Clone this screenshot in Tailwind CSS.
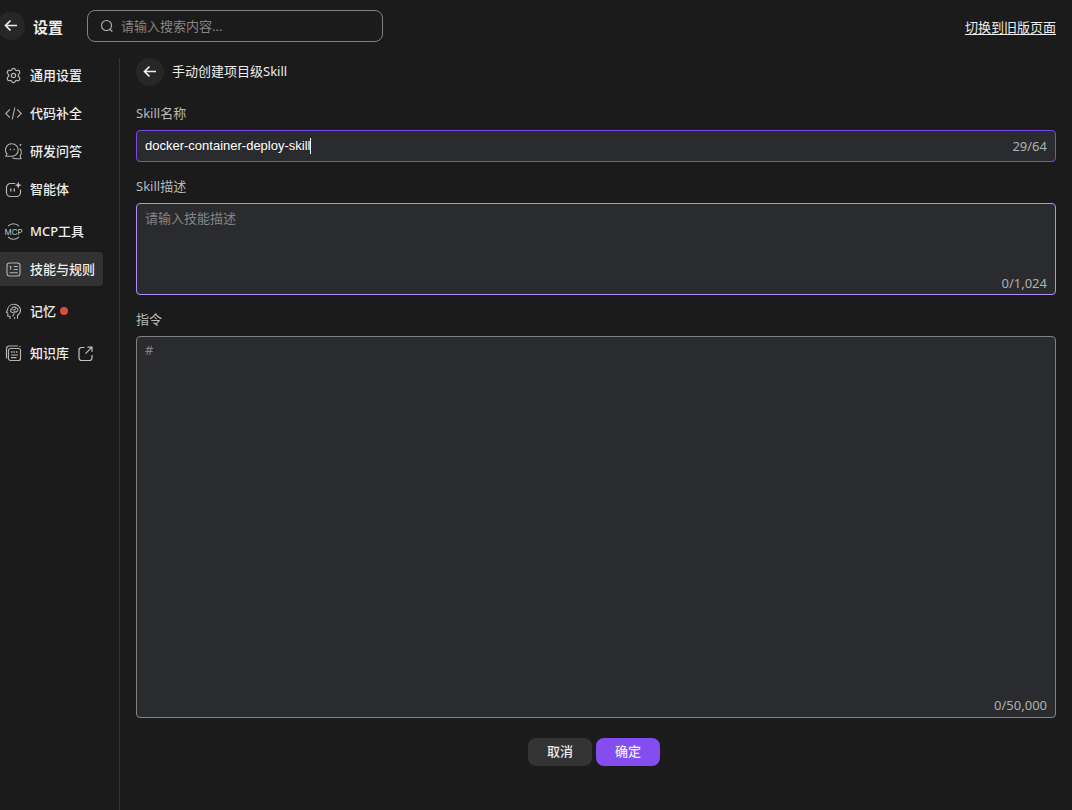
<!DOCTYPE html>
<html lang="zh-CN">
<head>
<meta charset="utf-8">
<meta name="viewport" content="width=device-width, initial-scale=1">
<title>设置</title>
<script src="https://cdn.jsdelivr.net/npm/@tailwindcss/browser@4"></script>
</head>
<body class="flex min-h-screen flex-col overflow-x-hidden bg-[#1b1b1b] font-['Noto_Sans','Noto_Sans_CJK_SC',sans-serif] text-[13px] leading-5 text-[#ededed]">
<header class="flex h-[58px] shrink-0 items-start pt-2.5 pr-4">
  <div class="flex h-8 items-center">
    <button type="button" aria-label="返回" class="-ml-[3px] flex size-7 items-center justify-center rounded-full bg-[#272727]">
      <svg class="size-4" viewBox="0 0 16 16" fill="none" stroke="#eee" stroke-width="1.700"><path d="M14 7.500H2.700M7.500 2.500 2.500 7.500 7.500 12.500"/></svg>
    </button>
    <h1 class="ml-2 pt-0.5 text-[15px] font-bold">设置</h1>
  </div>
  <label class="ml-6 flex h-8 w-[296px] items-center gap-[7px] rounded-lg border border-[#828282] px-3">
    <svg class="size-3.5 shrink-0" viewBox="0 0 14 14" fill="none" stroke="#b5b5b5" stroke-width="1.1"><circle cx="6.500" cy="6.500" r="5"/><path d="m10 10.500 2.300 2"/></svg>
    <input type="text" aria-label="搜索" placeholder="请输入搜索内容..." class="min-w-0 flex-1 bg-transparent outline-none placeholder:text-[#858585]">
  </label>
  <a href="#" class="mt-[7px] ml-auto underline underline-offset-2">切换到旧版页面</a>
</header>

<div class="flex flex-1">
  <nav class="w-[120px] shrink-0 border-r border-[#363636] pr-4 font-medium">
    <ul class="flex flex-col gap-1">
      <li><a href="#" class="flex h-[34px] items-center gap-2 pl-[5px]">
        <svg class="size-[17px]" viewBox="0 0 17 17" fill="none" stroke="#b4b4b4" stroke-width="1.200" stroke-linejoin="round"><path d="M6.700 2.800Q7 1.300 8.500 1.300t1.800 1.500q.5 1 1.700.7 1.700-.6 2.500.8t-.3 2.500q-1 .8-1 1.700t1 1.700q1.100 1.100.3 2.500t-2.500.8q-1.200-.3-1.700.7-.3 1.500-1.800 1.500t-1.800-1.500q-.5-1-1.700-.7-1.700.6-2.500-.8t.3-2.500q1-.8 1-1.700t-1-1.700Q1.700 5.700 2.500 4.300T5 3.500q1.200.3 1.700-.7z"/><circle cx="8.500" cy="8.500" r="2.100"/></svg>
        通用设置</a></li>
      <li><a href="#" class="flex h-[34px] items-center gap-2 pl-[5px]">
        <svg class="size-[17px]" viewBox="0 0 17 17" fill="none" stroke="#b4b4b4" stroke-width="1.1"><path d="M4.800 4.300.8 8.500l4 4.200M12.200 4.300l4 4.200-4 4.200M9.800 2.500 7.300 14.500"/></svg>
        代码补全</a></li>
      <li><a href="#" class="flex h-[34px] items-center gap-2 pl-[5px]">
        <svg class="size-[17px]" viewBox="0 0 17 17" fill="none" stroke="#b4b4b4" stroke-width="1.100" stroke-linejoin="round"><path d="M7 .8a6.200 6.200 0 0 1 0 12.400H.8l1.100-2.300A6.200 6.200 0 0 1 7 .8z"/><path d="M14.700 5.500a5.500 5.500 0 0 1 .4 7.300l1 3H11a6 6 0 0 1-3.600-1.200"/><path d="M5.400 5.700v1.600M9.100 5.700v1.600M15.500 1v1.800M14.600 1.900h1.800"/></svg>
        研发问答</a></li>
      <li><a href="#" class="flex h-[34px] items-center gap-2 pl-[5px]">
        <svg class="size-[17px]" viewBox="0 0 17 17" fill="none" stroke="#b4b4b4" stroke-width="1.200"><path d="M10.300 2.500H5.500a4 4 0 0 0-4 4v5a4 4 0 0 0 4 4h6a4 4 0 0 0 4-4V8.500"/><path stroke-width="1.400" d="M5.800 7.500v3M9.300 7.500v3"/><path fill="#c4c4c4" stroke="none" d="m13.200.8 1 2.500 2.600.9-2.600.9-1 2.600-1-2.600-2.500-.9 2.500-.9z"/></svg>
        智能体</a></li>
      <li class="mt-1"><a href="#" class="flex h-[34px] items-center gap-2 pl-[5px]">
        <svg class="size-[17px] overflow-visible" viewBox="0 0 17 17" fill="none" stroke="#b4b4b4" stroke-width="1.100"><path d="M3 3.200a7.500 7.500 0 0 1 11 0M3 13.800a7.500 7.500 0 0 0 11 0"/><text x="8.500" y="11.500" text-anchor="middle" font-family="Inter, sans-serif" font-size="8" font-weight="400" fill="#c4c4c4" stroke="none">MCP</text></svg>
        MCP工具</a></li>
      <li><a href="#" aria-current="page" class="flex h-[34px] items-center gap-2 rounded-r bg-[#323232] pl-[5px]">
        <svg class="size-[17px]" viewBox="0 0 17 17" fill="none" stroke="#b4b4b4" stroke-width="1.100"><rect x="2" y="2" width="13" height="13" rx="2.500"/><path d="M4.500 5.500h1.200v3.200M8.800 5.500h4M8.800 8.500h4M4.500 11.700h8.300"/></svg>
        技能与规则</a></li>
      <li class="mt-1"><a href="#" class="flex h-[34px] items-center gap-2 pl-[5px]">
        <svg class="size-[17px]" viewBox="0 0 17 17" fill="none" stroke="#b4b4b4" stroke-width="1.100" stroke-linejoin="round" stroke-linecap="round"><path d="M5 15.500v-2.300H2.800V10L1.300 9.300l1.300-2.600C2.800 3.500 5.600 1.300 9 1.300c3.800 0 6.500 2.700 6.500 6 0 2.300-1.200 3.900-3 5v3"/><path d="M7.700 9.500C5.200 9.300 4.800 6.500 6.800 6 7 3.700 10 3.300 10.700 4.800c2.300-.2 3 2.700 1.200 3.700-1 .8-2 .5-2.700 0M9.200 8.500c0 2 .1 3-1.400 4.500M8 6.800c1.200.4 2 .1 2.500-.8M9.500 15.500l.3-1"/></svg>
        记忆<span class="-ml-1 size-2 rounded-full bg-[#db4a3b]"></span></a></li>
      <li class="mt-1"><a href="#" class="flex h-[34px] items-center gap-2 pl-[5px]">
        <svg class="size-[17px]" viewBox="0 0 17 17" fill="none" stroke="#b4b4b4" stroke-width="1.200"><path d="M1.500 13.500V3.500a2.500 2.500 0 0 1 2.500-2.500H13"/><rect x="3.500" y="3.500" width="12" height="12" rx="2"/><path d="M6 10h7M6 12.700h5.500M15 1v1"/><path stroke-dasharray="1.500 1" stroke-width="1.500" d="M6 7h7"/></svg>
        知识库
        <svg class="size-[17px]" viewBox="0 0 17 17" fill="none" stroke="#c4c4c4" stroke-width="1.200"><path d="M7.500 2.500H4.500A2.500 2.500 0 0 0 2 5v8a2.500 2.500 0 0 0 2.500 2.500h8A2.500 2.500 0 0 0 15 13V10M10.500 2.200H15v4.600M15 2.200 8.500 8.700"/></svg></a></li>
    </ul>
  </nav>

  <main class="flex min-w-0 flex-1 flex-col pr-4 pb-11 pl-4">
    <div class="flex h-7 items-center gap-2">
      <button type="button" aria-label="返回" class="flex size-7 items-center justify-center rounded-full bg-[#272727]">
        <svg class="size-4" viewBox="0 0 16 16" fill="none" stroke="#eee" stroke-width="1.700"><path d="M14 7.500H2.700M7.500 2.500 2.500 7.500 7.500 12.500"/></svg>
      </button>
      <h2 class="pb-0.5">手动创建项目级Skill</h2>
    </div>
    <form class="flex flex-1 flex-col pt-[17px]">
      <label for="name" class="text-[#b8b8b8]">Skill名称</label>
      <div class="mt-[7px] flex h-8 items-center rounded border border-[#7d48e8] bg-[#2a2b2e] px-2">
        <input id="name" type="text" value="docker-container-deploy-skill" maxlength="64" class="field-sizing-content bg-transparent font-['Liberation_Sans',sans-serif] text-white caret-transparent outline-none">
        <span class="h-4 w-px bg-white"></span>
        <span class="ml-auto text-[#b0b0b0]">29/64</span>
      </div>
      <label for="desc" class="mt-3.5 text-[#b8b8b8]">Skill描述</label>
      <div class="mt-[7px] flex h-[92px] flex-col rounded border border-[#b190f5] bg-[#2a2b2e] px-2 pt-1 pb-px">
        <textarea id="desc" placeholder="请输入技能描述" class="min-h-0 flex-1 resize-none bg-transparent outline-none placeholder:text-[#858585]"></textarea>
        <span class="self-end text-[#b0b0b0]">0/1,024</span>
      </div>
      <label for="body" class="mt-3.5 text-[#b8b8b8]">指令</label>
      <div class="mt-[7px] flex min-h-40 flex-1 flex-col rounded border border-[#828282] bg-[#2a2b2e] px-2 pt-[3px] pb-0.5">
        <textarea id="body" placeholder="#" class="min-h-0 flex-1 resize-none bg-transparent outline-none placeholder:text-[#858585]"></textarea>
        <span class="self-end text-[#b0b0b0]">0/50,000</span>
      </div>
      <div class="mt-5 mr-1 flex justify-center gap-1">
        <button type="button" class="h-7 w-16 rounded-lg bg-[#333333] pb-0.5 font-medium">取消</button>
        <button type="submit" class="h-7 w-16 rounded-lg bg-[#844df0] pb-0.5 font-medium">确定</button>
      </div>
    </form>
  </main>
</div>
</body>
</html>
